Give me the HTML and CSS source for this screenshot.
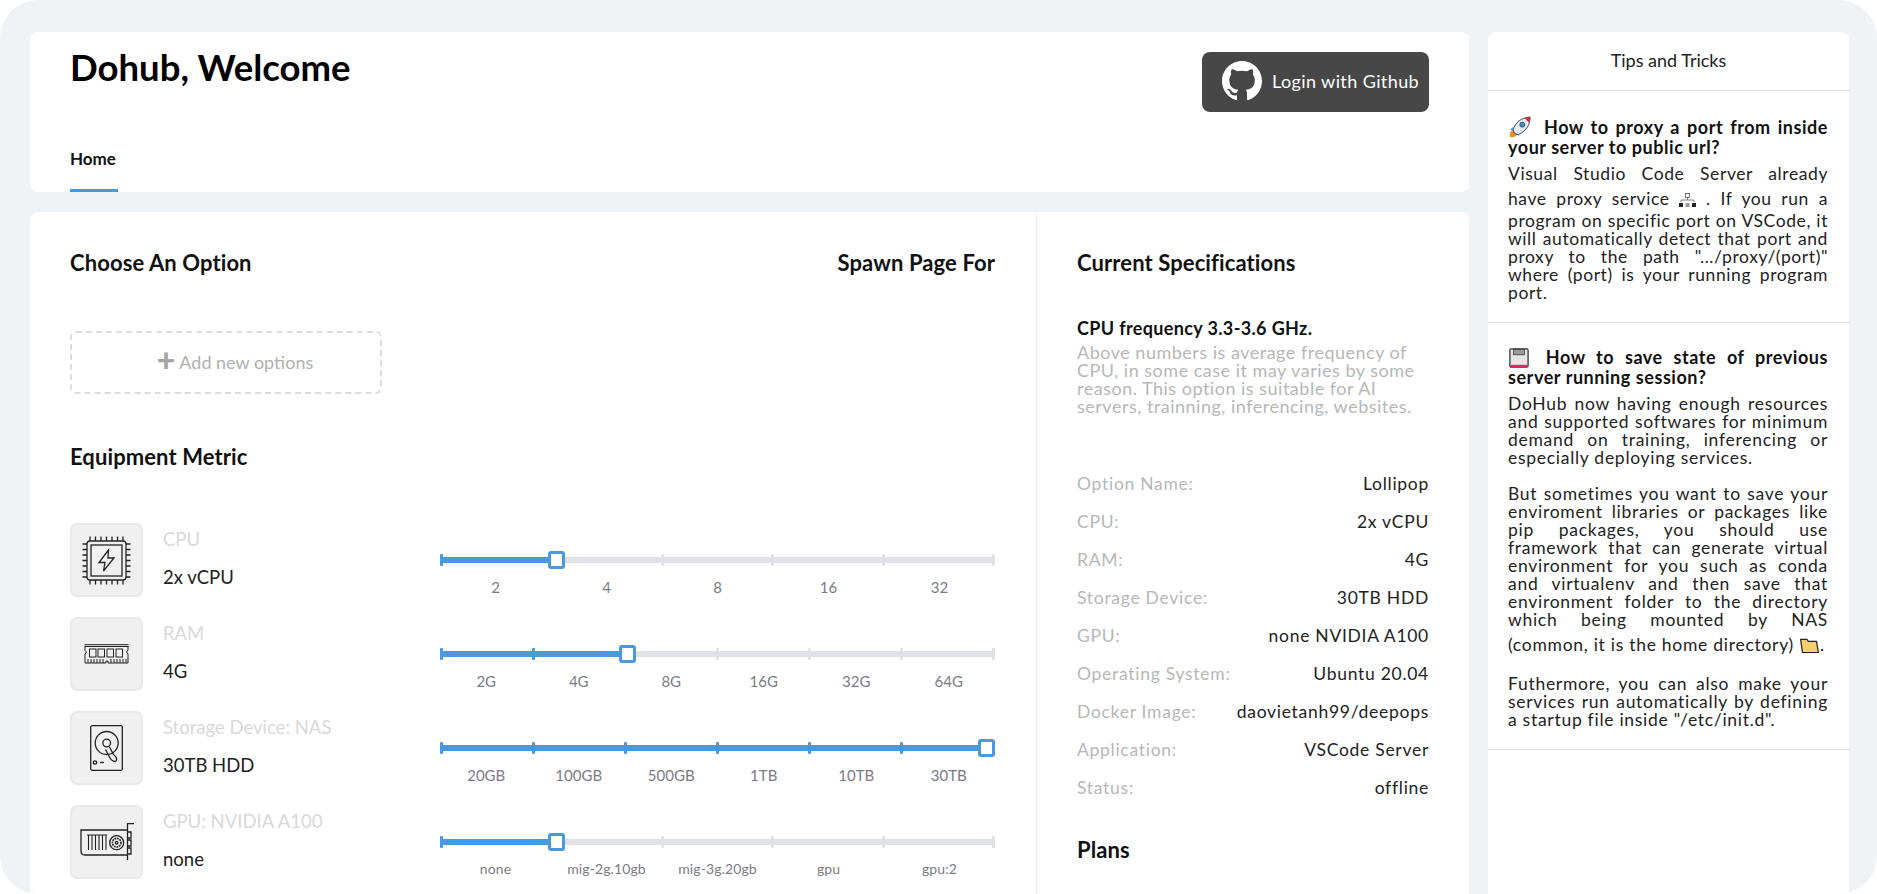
FILE: index.html
```html
<!DOCTYPE html>
<html lang="en">
<head>
    <meta charset="UTF-8">
    <meta name="viewport" content="width=device-width, initial-scale=1.0">
    <title>Dohub</title>
    <link rel="stylesheet" href="styles.css">
</head>
<body>
    <div class="page">
        <div class="content">
            <!-- top header -->
            <div class="top-card">
                <div class="top-row">
                    <h1>Dohub, Welcome</h1>
                    <button class="login-button">
                        <svg class="github" viewBox="0 0 16 16"><path fill="#fff" d="M8 0C3.58 0 0 3.58 0 8c0 3.54 2.29 6.53 5.47 7.59.4.07.55-.17.55-.38 0-.19-.01-.82-.01-1.49-2.01.37-2.53-.49-2.69-.94-.09-.23-.48-.94-.82-1.13-.28-.15-.68-.52-.01-.53.63-.01 1.08.58 1.23.82.72 1.21 1.87.87 2.33.66.07-.52.28-.87.51-1.07-1.78-.2-3.64-.89-3.64-3.95 0-.87.31-1.59.82-2.15-.08-.2-.36-1.02.08-2.12 0 0 .67-.21 2.2.82.64-.18 1.32-.27 2-.27.68 0 1.36.09 2 .27 1.53-1.04 2.2-.82 2.2-.82.44 1.1.16 1.92.08 2.12.51.56.82 1.27.82 2.15 0 3.07-1.87 3.75-3.65 3.95.29.25.54.73.54 1.48 0 1.07-.01 1.93-.01 2.2 0 .21.15.46.55.38A8.013 8.013 0 0016 8c0-4.42-3.58-8-8-8z"/></svg>
                        <span>Login with Github</span>
                    </button>
                </div>
                <div class="tabs"><a class="tab">Home</a></div>
            </div>

            <div class="main-card">
                <!-- options and sliders -->
                <div class="options">
                    <div class="heading-row">
                        <h2>Choose An Option</h2>
                        <h2>Spawn Page For</h2>
                    </div>
                    <div class="add-option"><b>+</b> Add new options</div>
                    <h2 class="metric-title">Equipment Metric</h2>

                    <div class="metric-list">
                        <div class="metric">
                            <div class="metric-info">
                                <div class="metric-icon">
                                    <svg width="49" height="49" viewBox="0 0 49 49" fill="none" stroke="#222" stroke-width="1.300">
                                        <rect x="5" y="5" width="39" height="39" rx="3"/>
                                        <rect x="9" y="9" width="31" height="31"/>
                                        <path d="M26.500 14 17 26.500h6L21.500 35 32 22h-6z"/>
                                        <path d="M8 .5v4.500M13.500 .5v4.500M19 .5v4.500M24.500 .5v4.500M30 .5v4.500M35.500 .5v4.500M41 .5v4.500M8 44v4.500M13.500 44v4.500M19 44v4.500M24.500 44v4.500M30 44v4.500M35.500 44v4.500M41 44v4.500M.5 8H5M.5 13.500H5M.5 19H5M.5 24.500H5M.5 30H5M.5 35.500H5M.5 41H5M44 8h4.500M44 13.500h4.500M44 19h4.500M44 24.500h4.500M44 30h4.500M44 35.500h4.500M44 41h4.500"/>
                                    </svg>
                                </div>
                                <div class="metric-text">
                                    <div class="metric-label">CPU</div>
                                    <div class="metric-value">2x vCPU</div>
                                </div>
                            </div>
                            <div class="slider">
                                <div class="track">
                                    <div class="fill" style="width: 20%"></div>
                                    <i class="tick on"></i><i class="tick"></i><i class="tick"></i><i class="tick"></i><i class="tick"></i><i class="tick"></i>
                                    <span class="thumb" style="left: calc((100% - 17px) * 0.2)"></span>
                                </div>
                                <div class="scale"><span>2</span><span>4</span><span>8</span><span>16</span><span>32</span></div>
                            </div>
                        </div>

                        <div class="metric">
                            <div class="metric-info">
                                <div class="metric-icon">
                                    <svg width="45" height="20" viewBox="0 0 45 20" fill="none" stroke="#222" stroke-width="1">
                                        <path d="M.5 .7h44M.5 2.500h44"/>
                                        <path d="M1 2.500v4l1.500 1.500L1 10v9h21v-2h2v2h20v-9l-1.500-2L44 6V2.500"/>
                                        <rect x="5.500" y="5" width="6.500" height="8"/>
                                        <rect x="14" y="5" width="6.500" height="8"/>
                                        <rect x="23" y="5" width="6.500" height="8"/>
                                        <rect x="32" y="5" width="6.500" height="8"/>
                                        <path d="M4 15v4M7 15v4M10 15v4M13 15v4M16 15v4M19 15v4M27 15v4M30 15v4M33 15v4M36 15v4M39 15v4M42 15v4"/>
                                    </svg>
                                </div>
                                <div class="metric-text">
                                    <div class="metric-label">RAM</div>
                                    <div class="metric-value">4G</div>
                                </div>
                            </div>
                            <div class="slider">
                                <div class="track">
                                    <div class="fill" style="width: 33.3%"></div>
                                    <i class="tick on"></i><i class="tick on"></i><i class="tick on"></i><i class="tick"></i><i class="tick"></i><i class="tick"></i><i class="tick"></i>
                                    <span class="thumb" style="left: calc((100% - 17px) * 0.3333)"></span>
                                </div>
                                <div class="scale"><span>2G</span><span>4G</span><span>8G</span><span>16G</span><span>32G</span><span>64G</span></div>
                            </div>
                        </div>

                        <div class="metric">
                            <div class="metric-info">
                                <div class="metric-icon">
                                    <svg width="33" height="46" viewBox="0 0 33 46" fill="none" stroke="#222" stroke-width="1.300">
                                        <rect x=".7" y=".7" width="31.600" height="44.600" rx="1.500"/>
                                        <circle cx="16.700" cy="18" r="11.500"/>
                                        <circle cx="16.700" cy="18" r="3.800"/>
                                        <path d="M15.500 24.500 20 33c1.500 3 5.500 4.500 6.300 2.500 .8-2-.8-4.500-2.800-6L19.500 22"/>
                                        <circle cx="5" cy="37.500" r="1.700"/>
                                        <path d="M10 37.500h4"/>
                                    </svg>
                                </div>
                                <div class="metric-text">
                                    <div class="metric-label">Storage Device: NAS</div>
                                    <div class="metric-value">30TB HDD</div>
                                </div>
                            </div>
                            <div class="slider">
                                <div class="track">
                                    <div class="fill" style="width: 100%"></div>
                                    <i class="tick on"></i><i class="tick on"></i><i class="tick on"></i><i class="tick on"></i><i class="tick on"></i><i class="tick on"></i><i class="tick on"></i>
                                    <span class="thumb" style="left: calc(100% - 17px)"></span>
                                </div>
                                <div class="scale"><span>20GB</span><span>100GB</span><span>500GB</span><span>1TB</span><span>10TB</span><span>30TB</span></div>
                            </div>
                        </div>

                        <div class="metric">
                            <div class="metric-info">
                                <div class="metric-icon">
                                    <svg width="54" height="38" viewBox="0 0 54 38" fill="none" stroke="#222" stroke-width="1.300">
                                        <path d="M48 7H1v21c0 2.500 1.500 4 4 4h43"/>
                                        <path d="M54 .7h-6.500V37"/>
                                        <path d="M7 12h20M8.500 12v15M12 12v15M15.500 12v15M19 12v15M22.500 12v15M26 12v15" stroke-width="1.100"/>
                                        <circle cx="36.700" cy="19.700" r="7"/>
                                        <circle cx="36.700" cy="19.700" r="4.300" stroke-dasharray="1.800 .7" stroke-width="1.600"/>
                                        <circle cx="36.700" cy="19.700" r="1.300"/>
                                        <path d="M48 9h3v6h-3M48 17h3v6h-3M48 25h3v6h-3"/>
                                    </svg>
                                </div>
                                <div class="metric-text">
                                    <div class="metric-label">GPU: NVIDIA A100</div>
                                    <div class="metric-value">none</div>
                                </div>
                            </div>
                            <div class="slider">
                                <div class="track">
                                    <div class="fill" style="width: 20%"></div>
                                    <i class="tick on"></i><i class="tick"></i><i class="tick"></i><i class="tick"></i><i class="tick"></i><i class="tick"></i>
                                    <span class="thumb" style="left: calc((100% - 17px) * 0.2)"></span>
                                </div>
                                <div class="scale small"><span>none</span><span>mig-2g.10gb</span><span>mig-3g.20gb</span><span>gpu</span><span>gpu:2</span></div>
                            </div>
                        </div>
                    </div>
                </div>

                <!-- current specifications -->
                <div class="specs">
                    <h2>Current Specifications</h2>
                    <div class="spec-title">CPU frequency 3.3-3.6 GHz.</div>
                    <p class="spec-note">Above numbers is average frequency of CPU, in some case it may varies by some reason. This option is suitable for AI servers, trainning, inferencing, websites.</p>
                    <div class="spec-list">
                        <div class="spec-row"><span>Option Name:</span><span>Lollipop</span></div>
                        <div class="spec-row"><span>CPU:</span><span>2x vCPU</span></div>
                        <div class="spec-row"><span>RAM:</span><span>4G</span></div>
                        <div class="spec-row"><span>Storage Device:</span><span>30TB HDD</span></div>
                        <div class="spec-row"><span>GPU:</span><span>none NVIDIA A100</span></div>
                        <div class="spec-row"><span>Operating System:</span><span>Ubuntu 20.04</span></div>
                        <div class="spec-row"><span>Docker Image:</span><span>daovietanh99/deepops</span></div>
                        <div class="spec-row"><span>Application:</span><span>VSCode Server</span></div>
                        <div class="spec-row"><span>Status:</span><span>offline</span></div>
                    </div>
                    <h2 class="plans-title">Plans</h2>
                </div>
            </div>
        </div>

        <!-- tips panel -->
        <div class="tips">
            <div class="tips-header">Tips and Tricks</div>
            <div class="tip tip-tight">
                <h3>
                    <svg class="emoji rocket" viewBox="0 0 24 24"><path d="M1 23c-.5-4 .5-6.500 3-8l5 5c-1.500 2.500-4 3.500-8 3z" fill="#f08a24"/><path d="M6 19 4.500 15C7 7 13 2 23 1c0 10-5 15.500-13 19.500z" fill="#e4ecf3" stroke="#33414e" stroke-width="1"/><path d="M17 2.300 23 1c.2 2.500-.1 4.500-1 6.300z" fill="#d8293a"/><circle cx="14.500" cy="9.500" r="2.700" fill="#3d8fd6" stroke="#33414e" stroke-width=".9"/><path d="M4.500 12 1 15l4 1zM11 19.500 9 23l4.500-4.500z" fill="#4a9be0"/></svg>
                    How to proxy a port from inside your server to public url?
                </h3>
                <p>Visual Studio Code Server already have proxy service
                    <svg class="emoji network" viewBox="0 0 17 14"><rect x="6.500" y=".5" width="4" height="4" fill="#fff" stroke="#555" stroke-width=".8"/><path d="M8.500 4.500V7M2 9V7h13v2" fill="none" stroke="#666" stroke-width=".8"/><rect y="10" width="4" height="4" fill="#222"/><rect x="6.500" y="10" width="4" height="4" fill="#999"/><rect x="13" y="10" width="4" height="4" fill="#222"/></svg> . If you run a program on specific port on VSCode, it will automatically detect that port and proxy to the path ".../proxy/(port)" where (port) is your running program port.</p>
            </div>
            <div class="tip">
                <h3>
                    <svg class="emoji floppy" viewBox="0 0 22 22"><rect x="1" y="1" width="20" height="20" rx="1.500" fill="#e6e6e6" stroke="#333" stroke-width="1.400"/><rect x="5" y="1.500" width="12" height="6" fill="#9a9a9a" stroke="#333" stroke-width=".8"/><rect x="1.500" y="18.500" width="19" height="2.500" fill="#d9305a"/></svg>
                    How to save state of previous server running session?
                </h3>
                <p>DoHub now having enough resources and supported softwares for minimum demand on training, inferencing or especially deploying services.<br><br>But sometimes you want to save your enviroment libraries or packages like pip packages, you should use framework that can generate virtual environment for you such as conda and virtualenv and then save that environment folder to the directory which being mounted by NAS (common, it is the home directory)
                    <svg class="emoji folder" viewBox="0 0 21 16"><path d="M1 1.500h7l1 2h9l2 12H3z" fill="#f7cf6b" stroke="#222" stroke-width="1.300" stroke-linejoin="round"/></svg>.<br><br>Futhermore, you can also make your services run automatically by defining a startup file inside "/etc/init.d".</p>
            </div>
        </div>
    </div>
</body>
</html>
```

FILE: styles.css
```css
* { box-sizing: border-box; }

html, body { margin: 0; height: 100%; background: #fff; }

body { font-family: "Lato", "Noto Sans", sans-serif; color: #111; overflow: hidden; }

h1, h2, h3, p { margin: 0; }

.page {
    display: flex;
    gap: 19px;
    height: 894px;
    padding: 32px 28px 0 30px;
    background: #eff3f6;
    border-radius: 38px;
    overflow: hidden;
}

.content { flex: 0 0 1439px; display: flex; flex-direction: column; gap: 20px; }

/* header card */
.top-card {
    display: flex;
    flex-direction: column;
    height: 160px;
    padding: 0 40px;
    background: #fff;
    border-radius: 8px;
}
.top-row { display: flex; justify-content: space-between; align-items: flex-start; }
h1 { margin-top: 13px; font-size: 36.500px; line-height: 44px; font-weight: 700; color: #000; }
.login-button {
    display: flex;
    align-items: center;
    gap: 10px;
    width: 227px;
    height: 60px;
    margin-top: 20px;
    padding: 0 0 2px 20px;
    background: #474747;
    border: 0;
    border-radius: 8px;
    color: #fff;
    font-family: inherit;
    font-size: 18px;
    letter-spacing: .4px;
}
.github { width: 40px; height: 40px; }
.tabs { margin-top: auto; }
.tab {
    display: inline-block;
    width: 48px;
    padding-bottom: 20px;
    border-bottom: 3px solid #4299e1;
    font-size: 17px;
    line-height: 20px;
    font-weight: 700;
    color: #111;
}

/* main card */
.main-card { display: flex; flex: 1; background: #fff; border-radius: 8px 8px 0 0; }
.options { flex: 0 0 1006px; padding: 39px 41px 0 40px; }
.specs { flex: 1; padding: 39px 40px 0 40px; border-left: 1px solid #eceef1; }

h2 { font-size: 22px; line-height: 24px; font-weight: 700; letter-spacing: .1px; color: #111; }
.heading-row { display: flex; justify-content: space-between; }

.add-option {
    width: 312px;
    height: 63px;
    margin-top: 56px;
    padding-left: 18px;
    border: 2px dashed #dcdcdc;
    border-radius: 6px;
    color: #b0b0b0;
    font-size: 18px;
    line-height: 59px;
    text-align: center;
}
.add-option b { font-size: 32px; line-height: 20px; font-weight: 900; vertical-align: -3px; color: #a5a5a5; }

.metric-title { margin-top: 51px; }
.metric-list { display: flex; flex-direction: column; gap: 20px; margin-top: 54px; }
.metric { display: flex; height: 74px; }
.metric-info { display: flex; flex: 0 0 370px; gap: 20px; }
.metric-icon {
    display: flex;
    align-items: center;
    justify-content: center;
    flex: 0 0 73px;
    height: 74px;
    background: #f0f0f0;
    border: 2px solid #e9e9e9;
    border-radius: 7px;
}
.metric-text { padding-top: 5px; font-size: 18.500px; line-height: 22px; }
.metric-label { color: #d9d9d9; }
.metric-value { margin-top: 16px; color: #222; }

/* sliders */
.slider { flex: 1; padding-top: 31px; }
.track { position: relative; display: flex; justify-content: space-between; align-items: center; height: 12px; }
.track::before {
    content: "";
    position: absolute;
    left: 0;
    right: 0;
    top: 3px;
    height: 6px;
    background: #e1e2e6;
}
.fill { position: absolute; left: 0; top: 3px; height: 6px; background: #4a98de; }
.tick { position: relative; width: 3px; height: 12px; background: #e1e2e6; border-radius: 1px; }
.tick.on { background: #4a98de; }
.thumb {
    position: absolute;
    top: -3px;
    width: 17px;
    height: 18px;
    background: #fff;
    border: 3px solid #4a98de;
    border-radius: 3px;
}
.scale { display: flex; margin-top: 12px; font-size: 15px; line-height: 18px; color: #7b7b86; }
.scale span { flex: 1 1 0; text-align: center; }
.scale.small { font-size: 14px; letter-spacing: .1px; }

/* specifications */
.spec-title { margin-top: 43px; font-size: 18px; line-height: 20px; font-weight: 700; letter-spacing: .35px; }
.spec-note { margin-top: 5px; font-size: 18px; line-height: 18px; letter-spacing: .5px; color: #b7b7b7; }
.spec-list { margin-top: 50px; }
.spec-row { display: flex; justify-content: space-between; height: 38px; font-size: 17.500px; line-height: 38px; letter-spacing: .72px; color: #222; }
.spec-row span:first-child { color: #b7b7b7; }
.plans-title { margin-top: 31px; }

/* tips panel */
.tips { flex: 1; background: #fff; border-radius: 8px 8px 0 0; }
.tips-header { height: 59px; border-bottom: 1px solid #d9dce0; font-size: 18px; line-height: 56px; text-align: center; color: #222; }
.tip { padding: 25px 21px 20px 20px; border-bottom: 1px solid #d9dce0; text-align: justify; }
.tip h3 { font-size: 18px; line-height: 19px; font-weight: 700; letter-spacing: .55px; color: #111; }
.tip p { margin-top: 8px; font-size: 17.500px; line-height: 18px; letter-spacing: .72px; color: #222; }
.tip-tight p { letter-spacing: .58px; }
.emoji { vertical-align: -4px; }
.rocket { width: 24px; height: 22px; margin-right: 5px; }
.floppy { width: 22px; height: 20px; margin-right: 5px; }
.network { width: 17px; height: 14px; margin: 10px 0 5px; vertical-align: -7px; }
.folder { width: 21px; height: 15px; margin: 9px 0 4px; vertical-align: -6px; }
```
